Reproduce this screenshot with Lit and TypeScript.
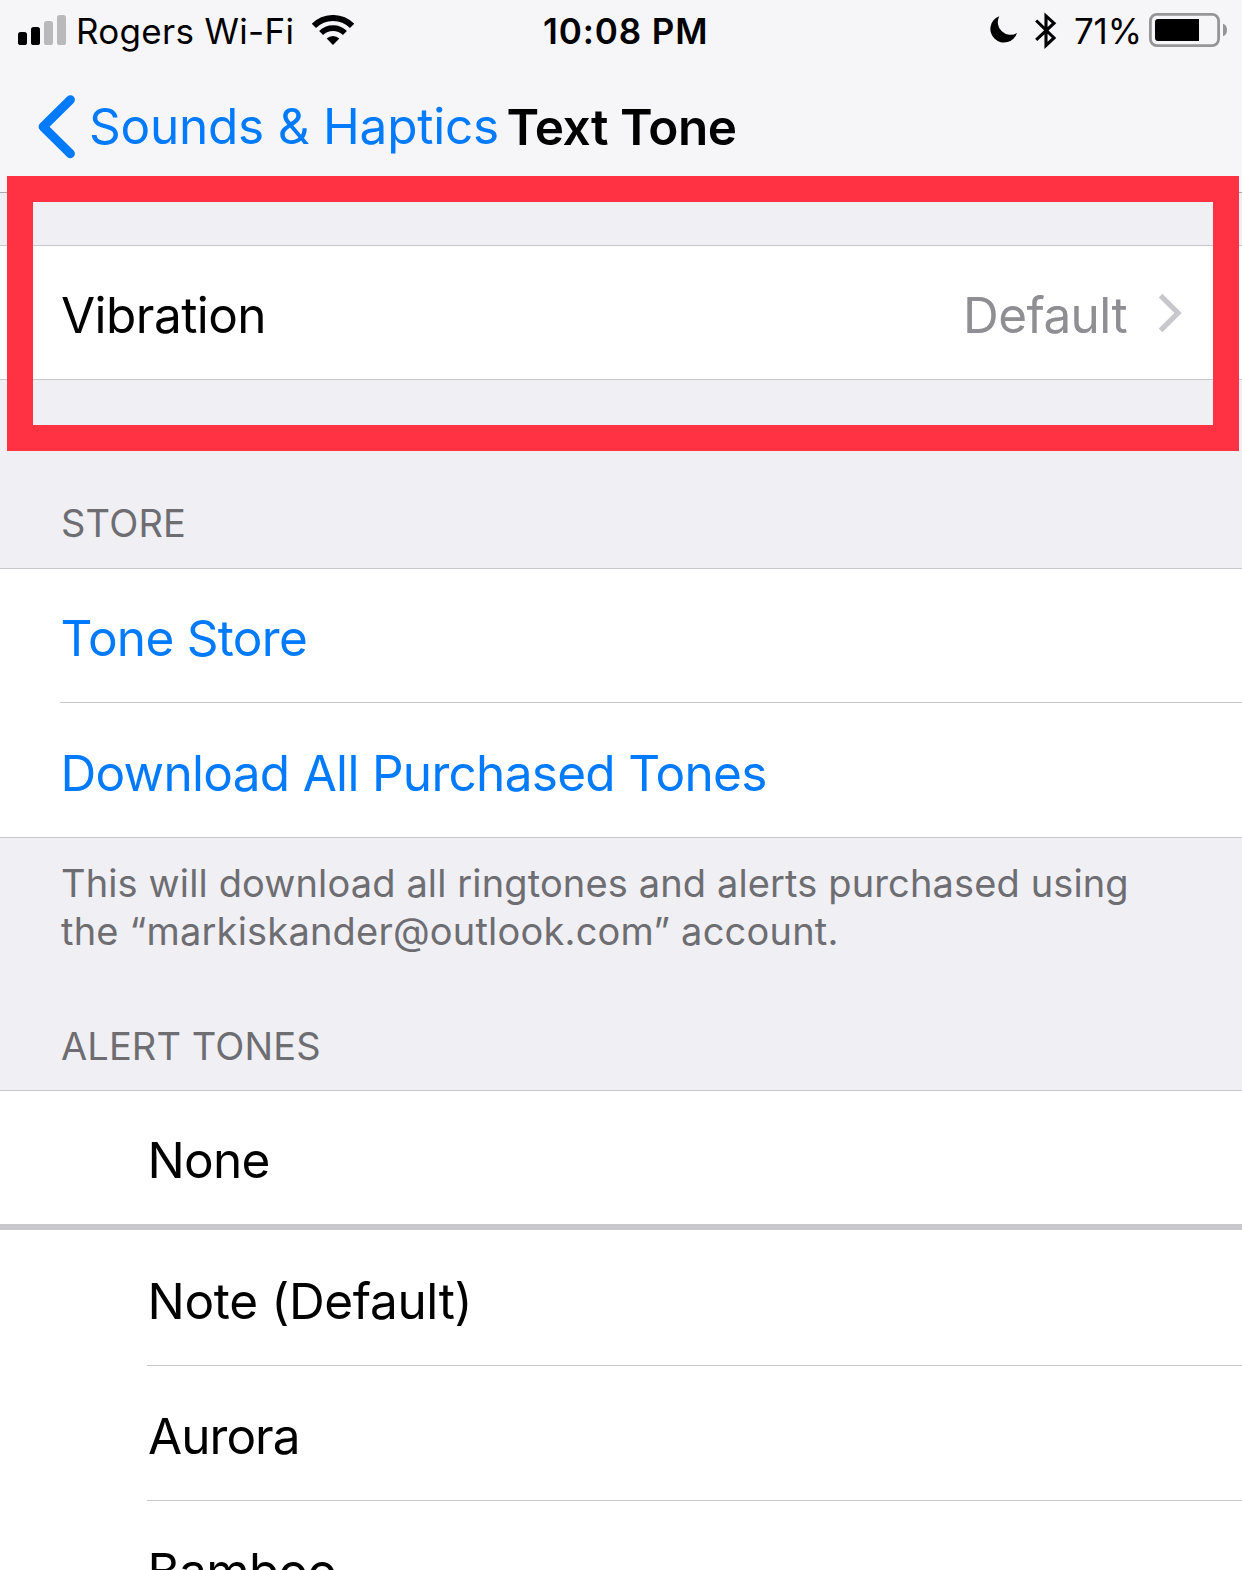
import { LitElement, css, html, svg } from 'lit';
import { classMap } from 'lit/directives/class-map.js';

interface ToneRow {
  label: string;
  kind: string;
}

const STORE_ROWS: ToneRow[] = [
  { label: 'Tone Store', kind: 'store' },
  { label: 'Download All Purchased Tones', kind: 'download' }
];

const ALERT_TONES: ToneRow[] = [
  { label: 'Note (Default)', kind: 'note' },
  { label: 'Aurora', kind: 'aurora' },
  { label: 'Bamboo', kind: 'bamboo' }
];

const SIGNAL_HEIGHTS = [13, 18, 24, 30];

export class StatusBarElement extends LitElement {
  public static override properties = {
    carrier: { type: String },
    time: { type: String },
    battery: { type: Number },
    signal: { type: Number }
  };

  public static override styles = css`
    :host {
      display: grid;
      grid-template-columns: 543px auto 1fr;
      align-items: center;
      height: 60px;
      font-size: 35px;
      line-height: 44px;
      color: #000000;
    }

    svg {
      display: block;
      flex: none;
    }

    .left,
    .right {
      display: flex;
      align-items: center;
    }

    .left {
      padding-left: 18px;
    }

    .right {
      justify-content: flex-end;
      padding-right: 15px;
    }

    .carrier,
    .time,
    .percent {
      padding-top: 2px;
      white-space: nowrap;
    }

    .carrier {
      margin-left: 10px;
      width: 236px;
      letter-spacing: 0.3px;
    }

    .time {
      font-weight: 600;
      letter-spacing: 0.9px;
    }

    .bluetooth {
      margin-left: 17px;
    }

    .percent {
      margin-left: 17px;
      width: 66px;
      letter-spacing: -0.2px;
    }

    .battery {
      margin-left: 9px;
    }
  `;

  public carrier: string = '';
  public time: string = '';
  public battery: number = 100;
  public signal: number = 4;

  public override render() {
    return html`
      <div class="left">
        <svg width="48" height="30" viewBox="0 0 48 30">
          ${SIGNAL_HEIGHTS.map(
            (height, index) => svg`
              <rect
                x=${index * 13}
                y=${30 - height}
                width="9"
                height=${height}
                rx="2.6"
                fill=${index < this.signal ? '#000000' : '#b9b9bb'}
              />
            `
          )}
        </svg>
        <span class="carrier">${this.carrier}</span>
        <svg width="42" height="30" viewBox="0 0 42 30" fill="none" stroke="#000000">
          <path d="M1.9 10.9A27 27 0 0 1 40.1 10.9" stroke-width="6" />
          <path d="M9.1 18.1A16.8 16.8 0 0 1 32.9 18.1" stroke-width="5.6" />
          <path d="M14.7 23.6A9 9 0 0 1 27.3 23.6L21 30Z" fill="#000000" stroke="none" />
        </svg>
      </div>
      <span class="time">${this.time}</span>
      <div class="right">
        <svg width="28" height="28" viewBox="0 0 28 28">
          <path d="M9.3 0.2A13.6 13.6 0 1 0 27 16.9A12.6 12.6 0 0 1 9.3 0.2Z" fill="#000000" />
        </svg>
        <svg class="bluetooth" width="22" height="37" viewBox="0 0 22 37">
          <path
            d="M1.2 8.5L19 26L11 33.4V3.9L19 11.2L1.2 27.8"
            fill="none"
            stroke="#000000"
            stroke-width="3.1"
          />
        </svg>
        <span class="percent">${this.battery}%</span>
        <svg class="battery" width="78" height="34" viewBox="0 0 78 34">
          <rect x="1.4" y="1.4" width="68.2" height="31.2" rx="6.5" fill="none" stroke="#969698" stroke-width="2.8" />
          <rect x="6" y="6" width="50" height="22" rx="3" clip-path="inset(0 6px 0 0)" fill="#000000" />
          <path d="M74 10.8C77 12 78 14 78 17S77 22 74 23.2Z" fill="#969698" />
        </svg>
      </div>
    `;
  }
}

export class AppRootElement extends LitElement {
  public static override styles = css`
    :host {
      display: block;
      position: relative;
      width: 1242px;
      height: 1570px;
      overflow: hidden;
      box-sizing: border-box;
      --line: #c8c7cc;
      --blue: #007aff;
      --group-bg: #efeff4;
      background: var(--group-bg);
      color: #000000;
      font-family: Inter, 'Liberation Sans', sans-serif;
      font-size: 49.5px;
      line-height: 60px;
    }

    svg {
      display: block;
      flex: none;
    }

    .header {
      height: 192px;
      background: #f6f6f8;
      border-bottom: 1px solid #a9a9ad;
    }

    .nav {
      display: flex;
      align-items: center;
      height: 132px;
      padding: 1px 0 0 38px;
      box-sizing: border-box;
      white-space: nowrap;
    }

    .back {
      display: flex;
      align-items: center;
      width: 468.5px;
      gap: 13px;
      color: var(--blue);
      letter-spacing: -0.23px;
    }

    .back-label {
      padding-bottom: 2px;
    }

    .title {
      font-weight: 600;
      letter-spacing: -0.5px;
    }

    .group {
      background: #ffffff;
      border-top: 1px solid var(--line);
      border-bottom: 1px solid var(--line);
    }

    .group.vibration {
      margin-top: 52px;
    }

    .row {
      display: flex;
      align-items: center;
      height: 133px;
      margin-left: 60px;
      white-space: nowrap;
    }

    .row + .row {
      height: 134px;
      border-top: 1px solid var(--line);
    }

    .label {
      flex: 1;
      padding: 5px 0 0 0.5px;
      letter-spacing: -0.7px;
    }

    .label.vibration {
      padding-left: 1px;
      letter-spacing: -0.55px;
    }

    .label.note {
      padding-top: 7px;
      letter-spacing: -0.35px;
    }

    .label.aurora {
      padding-left: 1px;
      letter-spacing: -0.95px;
    }

    .value {
      padding-top: 5px;
      margin-right: 31px;
      letter-spacing: -0.6px;
      color: #8e8e93;
    }

    .disclosure {
      margin-right: 60px;
    }

    .link {
      color: var(--blue);
    }

    .section-title,
    .footer {
      margin: 0;
      padding-left: 61px;
      font-size: 38px;
      font-weight: 400;
      line-height: 48px;
      color: #6d6d72;
    }

    .section-title {
      display: flex;
      align-items: flex-end;
      box-sizing: border-box;
      padding-bottom: 21px;
      height: 188px;
      letter-spacing: 0.2px;
    }

    .section-title.alerts {
      height: 135px;
      padding-bottom: 20px;
      letter-spacing: 0.1px;
    }

    .footer {
      padding-top: 21px;
      letter-spacing: 0.2px;
    }

    .footer::first-line {
      letter-spacing: 0.13px;
    }

    .group.tones {
      border-bottom: none;
    }

    .tones .row {
      margin-left: 147px;
    }

    .divider {
      height: 6px;
      background: var(--line);
    }

    .divider + .row {
      height: 135px;
    }

    .highlight {
      position: absolute;
      left: 7px;
      top: 176px;
      width: 1232px;
      height: 275px;
      box-sizing: border-box;
      border: 26px solid #fe3243;
    }
  `;

  public override render() {
    return html`
      <div class="header">
        <status-bar carrier="Rogers Wi-Fi" time="10:08 PM" battery="71" signal="2"></status-bar>
        <div class="nav">
          <div class="back">
            <svg width="38" height="64" viewBox="0 0 38 64">
              <path
                d="M32.4 4.7L5.1 31.7L32.4 58.7"
                fill="none"
                stroke="#007aff"
                stroke-width="9"
                stroke-linecap="round"
                stroke-linejoin="round"
              />
            </svg>
            <span class="back-label">Sounds &amp; Haptics</span>
          </div>
          <div class="title">Text Tone</div>
        </div>
      </div>

      <div class="group vibration">
        <div class="row">
          <span class="label vibration">Vibration</span>
          <span class="value">Default</span>
          <svg class="disclosure" width="24" height="40" viewBox="0 0 24 40">
            <path d="M2.6 2.6L20 20L2.6 37.4" fill="none" stroke="#c7c7cc" stroke-width="5.2" />
          </svg>
        </div>
      </div>

      <h2 class="section-title">STORE</h2>
      <div class="group">${STORE_ROWS.map((row) => this.renderRow(row, true))}</div>
      <p class="footer">
        This will download all ringtones and alerts purchased using<br />the “markiskander@outlook.com” account.
      </p>

      <h2 class="section-title alerts">ALERT TONES</h2>
      <div class="group tones">
        ${this.renderRow({ label: 'None', kind: 'none' })}
        <div class="divider"></div>
        ${ALERT_TONES.map((row) => this.renderRow(row))}
      </div>

      <div class="highlight"></div>
    `;
  }

  private renderRow(row: ToneRow, link: boolean = false) {
    return html`
      <div class="row">
        <span class=${classMap({ label: true, link, [row.kind]: true })}>${row.label}</span>
      </div>
    `;
  }
}

if (!customElements.get('status-bar')) {
  customElements.define('status-bar', StatusBarElement);
}

if (!customElements.get('app-root')) {
  customElements.define('app-root', AppRootElement);
}
